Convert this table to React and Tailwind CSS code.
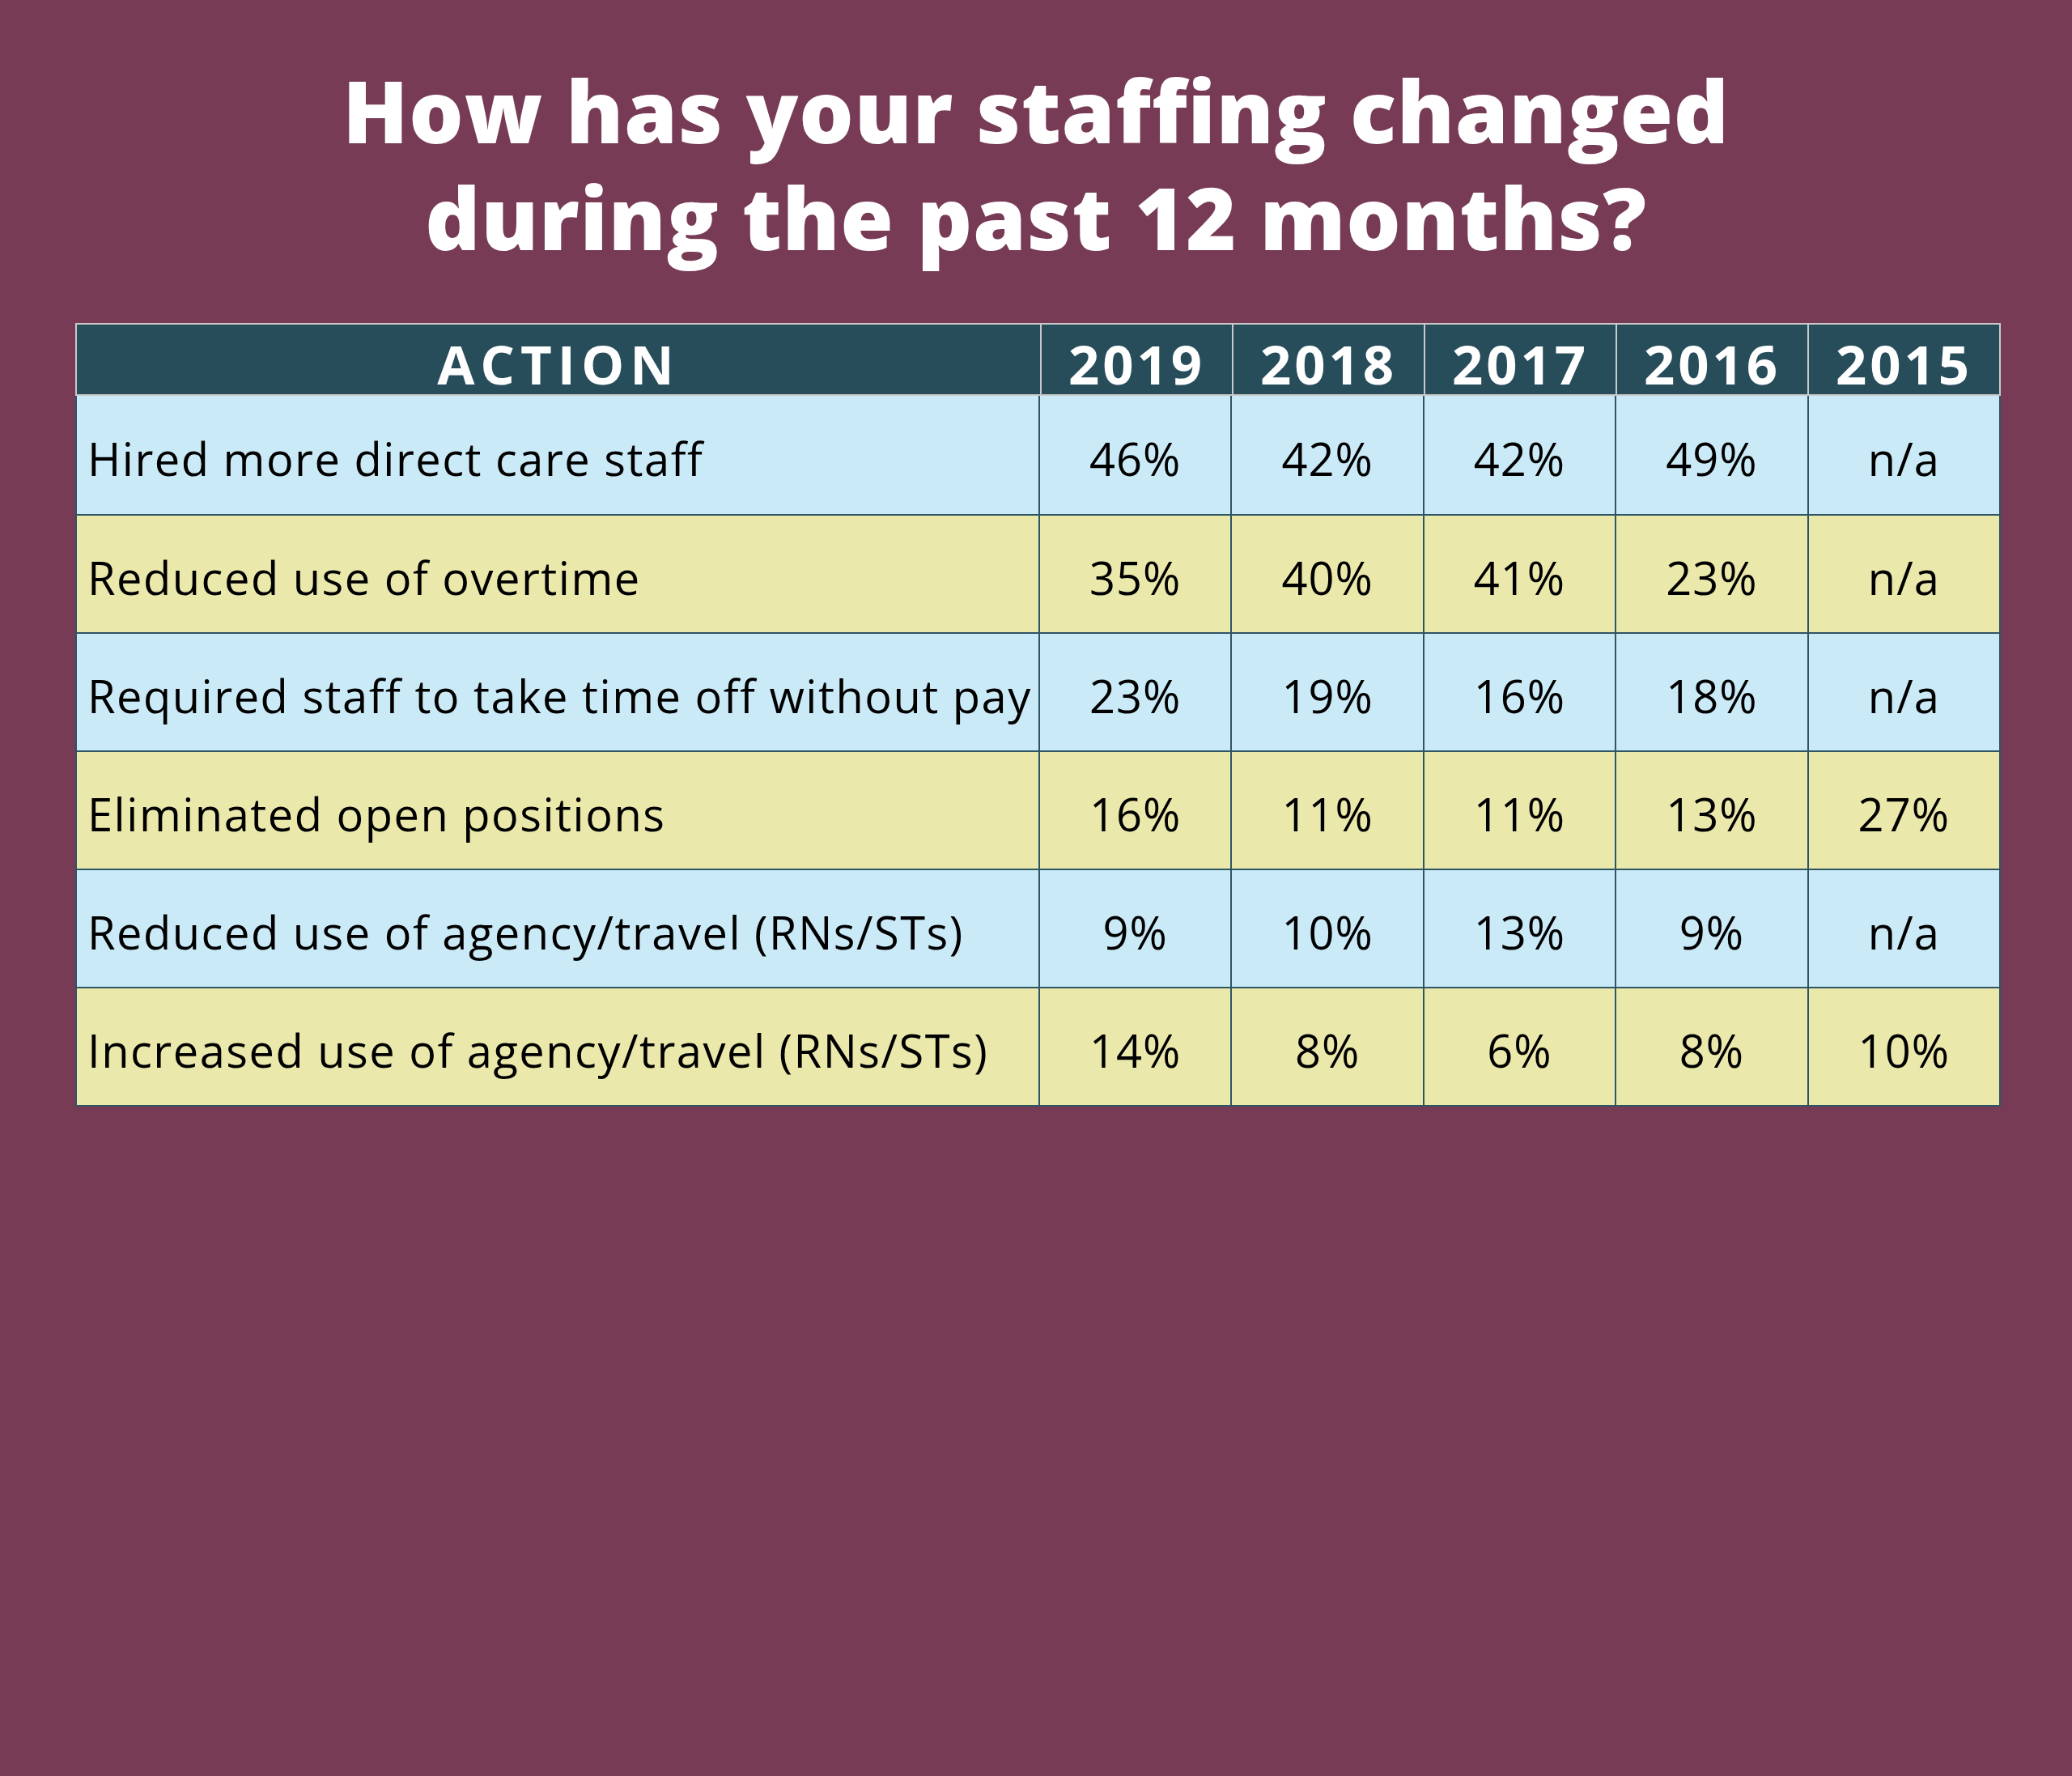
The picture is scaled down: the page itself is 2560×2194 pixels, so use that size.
export default function App() {
  const years = ["2019", "2018", "2017", "2016", "2015"];

  const rows = [
    { action: "Hired more direct care staff", values: ["46%", "42%", "42%", "49%", "n/a"] },
    { action: "Reduced use of overtime", values: ["35%", "40%", "41%", "23%", "n/a"] },
    { action: "Required staff to take time off without pay", values: ["23%", "19%", "16%", "18%", "n/a"] },
    { action: "Eliminated open positions", values: ["16%", "11%", "11%", "13%", "27%"] },
    { action: "Reduced use of agency/travel (RNs/STs)", values: ["9%", "10%", "13%", "9%", "n/a"] },
    { action: "Increased use of agency/travel (RNs/STs)", values: ["14%", "8%", "6%", "8%", "10%"] },
  ];

  return (
    <div className="w-[2560px] h-[2194px] bg-[#783B56] font-['Open_Sans',sans-serif]">
      <h1 className="pt-[70px] text-center text-white font-extrabold text-[106px] leading-[132px] tracking-[0.8px]">
        How has your staffing changed
        <br />
        during the past 12 months?
      </h1>

      <div className="ml-[93px] mt-[65px] w-[2379px]">
        {/* header */}
        <div className="grid grid-cols-[1190px_repeat(5,1fr)] h-[90px] bg-[#284D5A] border-2 border-[#c9c9c9]">
          <div className="flex items-end justify-center pb-[4px] text-white font-bold text-[67px] leading-none tracking-[7px]">
            ACTION
          </div>
          {years.map(y => (
            <div
              key={y}
              className="flex items-end justify-center pb-[4px] border-l-2 border-[#c9c9c9] text-white font-bold text-[67px] leading-none tracking-[4px]"
            >
              {y}
            </div>
          ))}
        </div>

        {/* body */}
        <div className="border-x-2 border-b-2 border-[#2E5563]">
          {rows.map((r, i) => (
            <div
              key={r.action}
              className={
                "grid grid-cols-[1188px_repeat(5,1fr)] h-[146px] " +
                (i > 0 ? "border-t-2 border-[#2E5563] " : "") +
                (i % 2 === 0 ? "bg-[#CBEAF7]" : "bg-[#EAE8AB]")
              }
            >
              <div className="flex items-center pl-[13px] pt-[8px] text-black text-[56px] tracking-[1.5px]">
                {r.action}
              </div>
              {r.values.map((v, j) => (
                <div
                  key={j}
                  className="flex items-center justify-center pt-[8px] border-l-2 border-[#2E5563] text-black text-[56px] tracking-[1px]"
                >
                  {v}
                </div>
              ))}
            </div>
          ))}
        </div>
      </div>
    </div>
  );
}
